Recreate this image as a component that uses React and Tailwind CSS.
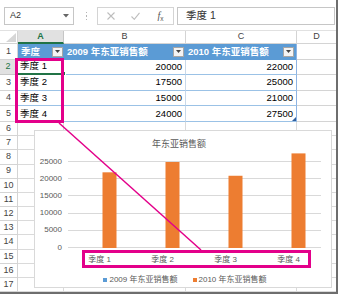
const tableRows = [
  ['季度 1', 20000, 22000],
  ['季度 2', 17500, 25000],
  ['季度 3', 15000, 21000],
  ['季度 4', 24000, 27500],
]

const ticks = [25000, 20000, 15000, 10000, 5000, 0]
const sales2010 = [22000, 25000, 21000, 27500]

function Filter() {
  return (
    <div className="w-[11px] h-[10px] bg-[#f4f4f4] border border-[#a6a6a6] flex items-center justify-center">
      <svg width="5" height="3"><path d="M0 0h5L2.5 3z" fill="#444" /></svg>
    </div>
  )
}

function FormulaBar() {
  return (
    <div className="h-[31px] flex items-start pt-[7px] pl-[4px] border-b border-[#e1e1e1]">
      <div className="w-[70px] h-[18px] border border-[#c6c6c6] flex items-center justify-between pl-[5px] pr-[4px]">
        <span className="text-[9px] text-[#333]">A2</span>
        <svg width="6" height="4"><path d="M0 0h6L3 3.5z" fill="#666" /></svg>
      </div>
      <div className="w-[23px] h-[18px] flex flex-col items-center justify-center gap-[2px] pl-[2px]">
        <div className="w-[1.5px] h-[1.5px] bg-[#b5b5b5]" />
        <div className="w-[1.5px] h-[1.5px] bg-[#b5b5b5]" />
        <div className="w-[1.5px] h-[1.5px] bg-[#b5b5b5]" />
      </div>
      <div className="w-[77px] h-[18px] border border-[#d4d4d4] flex items-center">
        <div className="w-[25px] flex justify-center">
          <svg width="8" height="8"><path d="M0.5 0.5l7 7M7.5 0.5l-7 7" stroke="#bdbdbd" strokeWidth="1.1" /></svg>
        </div>
        <div className="w-[25px] flex justify-center">
          <svg width="9" height="8"><path d="M0.5 4.5l2.8 2.8L8.5 0.8" stroke="#bdbdbd" strokeWidth="1.1" fill="none" /></svg>
        </div>
        <div className="w-[25px] flex justify-center items-end text-[#555] leading-none">
          <span className="italic font-['Liberation_Serif',serif] text-[10px]">f</span>
          <span className="text-[6.5px] -mb-[1px]">x</span>
        </div>
      </div>
      <div className="ml-[3px] w-[158px] h-[18px] border border-[#c6c6c6] flex items-center pl-[8px] text-[10.5px] text-[#333]">
        季度 1
      </div>
    </div>
  )
}

function RowHead({ n, active, h }) {
  return (
    <div
      className={
        active
          ? 'w-[18px] bg-[#e1e1e1] border-r-2 border-r-[#217346] border-b border-b-[#c6c6c6] flex items-center justify-center text-[9px] text-[#217346] ' + h
          : 'w-[18px] border-r border-b border-[#d4d4d4] flex items-center justify-center text-[9px] text-[#444] ' + h
      }
    >
      {n}
    </div>
  )
}

function Sheet() {
  return (
    <div>
      <div className="flex h-[13px]">
        <div className="w-[18px] border-r border-b border-[#d4d4d4] flex items-end justify-end pr-[1px] pb-[1px]">
          <svg width="10" height="9"><path d="M10 0V9H0z" fill="#d6d6d6" /></svg>
        </div>
        <div className="w-[46px] bg-[#e1e1e1] border-r border-r-[#c6c6c6] border-b-2 border-b-[#217346] flex items-center justify-center text-[9px] font-semibold text-[#217346]">A</div>
        <div className="w-[122px] border-r border-b border-[#d4d4d4] flex items-center justify-center text-[9px] text-[#444]">B</div>
        <div className="w-[111px] border-r border-b border-[#d4d4d4] flex items-center justify-center text-[9px] text-[#444]">C</div>
        <div className="w-[39px] border-b border-[#d4d4d4] flex items-center justify-center text-[9px] text-[#444]">D</div>
      </div>

      <div className="flex h-[15.6px]">
        <RowHead n={1} h="h-[15.6px]" />
        <div className="w-[46px] bg-[#5b9bd5] flex items-center justify-between pl-[3px] pr-[1px] text-[9.5px] font-bold text-white">
          <span>季度</span>
          <Filter />
        </div>
        <div className="w-[122px] bg-[#5b9bd5] flex items-center justify-between pl-[3px] pr-[2px] text-[9.5px] font-bold text-white">
          <span>2009 年东亚销售额</span>
          <Filter />
        </div>
        <div className="w-[111px] bg-[#5b9bd5] border-r border-r-[#8eb4e3] flex items-center justify-between pl-[2px] pr-[2px] text-[9.5px] font-bold text-white">
          <span>2010 年东亚销售额</span>
          <Filter />
        </div>
        <div className="w-[39px] border-b border-[#d4d4d4]" />
      </div>

      {tableRows.map((r, i) => (
        <div key={r[0]} className="flex h-[15.6px]">
          <RowHead n={i + 2} active={i === 0} h="h-[15.6px]" />
          <div
            className={
              i === 0
                ? 'relative w-[46px] border-r border-r-[#c9d9ea] border-b-2 border-b-[#217346] flex items-center pl-[2px] text-[9.5px] text-black'
                : 'w-[46px] border-r border-r-[#c9d9ea] border-b border-b-[#9bc2e6] flex items-center pl-[2px] text-[9.5px] text-black'
            }
          >
            {r[0]}
            {i === 0 && (
              <div className="absolute -right-[3px] -bottom-[3px] w-[5px] h-[5px] bg-[#217346] border border-white" />
            )}
          </div>
          <div className="w-[122px] border-r border-r-[#c9d9ea] border-b border-b-[#9bc2e6] flex items-center justify-end pr-[3px] text-[9.5px] text-black">
            {r[1]}
          </div>
          <div className="relative w-[111px] border-r border-r-[#8eb4e3] border-b border-b-[#9bc2e6] flex items-center justify-end pr-[3px] text-[9.5px] text-black">
            {r[2]}
            {i === 3 && (
              <svg className="absolute right-0 bottom-0" width="4" height="4"><path d="M4 0V4H0z" fill="#2f5f9e" /></svg>
            )}
          </div>
          <div className="w-[39px] border-b border-[#d4d4d4]" />
        </div>
      ))}

      {Array.from({ length: 12 }, (_, i) => (
        <div key={i} className="flex h-[14.2px]">
          <RowHead n={i + 6} h="h-[14.2px]" />
          <div className="w-[46px] border-r border-b border-[#dadada]" />
          <div className="w-[122px] border-r border-b border-[#dadada]" />
          <div className="w-[111px] border-r border-b border-[#dadada]" />
          <div className="w-[39px] border-b border-[#dadada]" />
        </div>
      ))}
    </div>
  )
}

function Chart() {
  const scale = 86 / 25000
  return (
    <div className="absolute left-[34px] top-[130px] w-[298px] h-[158px] bg-white border border-[#d9d9d9] text-[#595959]">
      <div className="pt-[7px] pr-[8px] text-center text-[9px] leading-[12px]">年东亚销售额</div>
      <div className="mt-[3px] flex h-[95px]">
        <div className="w-[27px] flex flex-col">
          {ticks.map(t => (
            <div key={t} className="h-[17.2px] shrink-0 flex items-center justify-end text-[8px] leading-[10px]">{t}</div>
          ))}
        </div>
        <svg className="ml-[6px]" width="253" height="95">
          {ticks.map((t, k) => {
            const y = Math.round(95 - (5 - k) * 17.2) - 0.5
            return <line key={t} x1="0" x2="253" y1={y} y2={y} stroke="#d9d9d9" strokeWidth="1" />
          })}
          {sales2010.map((v, i) => {
            const h = v * scale
            return <rect key={i} x={i * 63 + 34.5} y={95 - h} width="14" height={h} fill="#ed7d31" />
          })}
        </svg>
      </div>
      <div className="flex pl-[33px] pt-[7px]">
        {['季度 1', '季度 2', '季度 3', '季度 4'].map(q => (
          <div key={q} className="w-[63px] text-center text-[8px] leading-[10px]">{q}</div>
        ))}
      </div>
      <div className="mt-[9px] pl-[4px] flex justify-center items-center gap-[15px] text-[8px] leading-[11px]">
        <div className="flex items-center gap-[2px]">
          <div className="w-[4px] h-[4px] bg-[#5b9bd5]" />
          <span>2009 年东亚销售额</span>
        </div>
        <div className="flex items-center gap-[2px]">
          <div className="w-[4px] h-[4px] bg-[#ed7d31]" />
          <span>2010 年东亚销售额</span>
        </div>
      </div>
    </div>
  )
}

export default function App() {
  return (
    <div className="relative w-[338px] h-[294px] overflow-hidden bg-white border-r-2 border-b-2 border-[#6e6e6e] font-['Liberation_Sans','Noto_Sans_CJK_SC',sans-serif]">
      <FormulaBar />
      <Sheet />
      <Chart />
      <div className="absolute left-[15px] top-[58px] w-[49px] h-[65px] border-[3px] border-[#e3008a]" />
      <div className="absolute left-[82px] top-[250px] w-[229px] h-[18px] border-[3px] border-[#e3008a]" />
      <svg className="absolute left-0 top-0 pointer-events-none" width="338" height="294">
        <line x1="59" y1="123" x2="201" y2="250" stroke="#e3008a" strokeWidth="1.5" />
      </svg>
    </div>
  )
}
